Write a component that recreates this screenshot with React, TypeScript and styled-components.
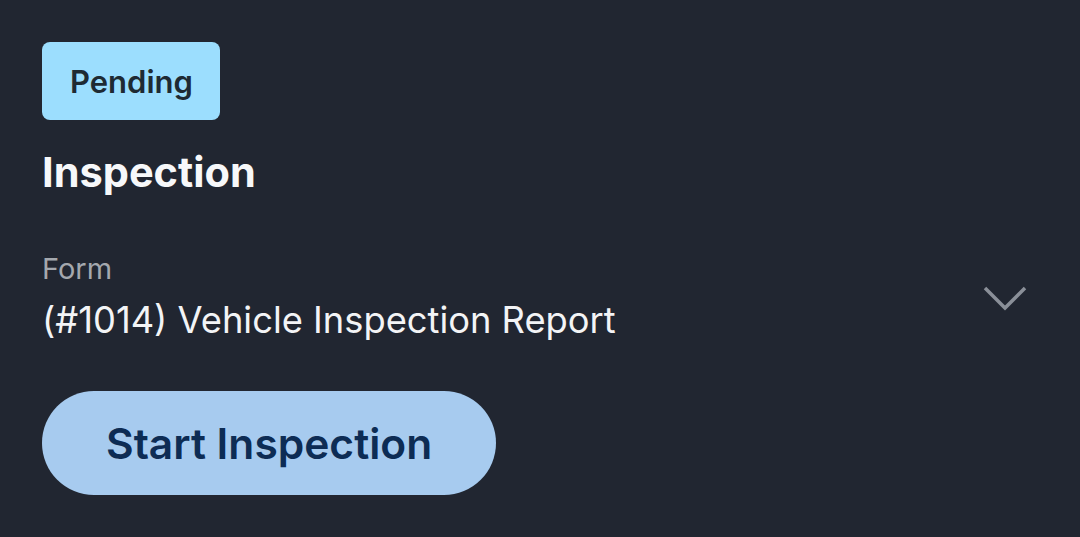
import React from 'react'
import styled, { createGlobalStyle } from 'styled-components'

const GlobalStyle = createGlobalStyle`
  html, body {
    margin: 0;
    padding: 0;
    background: #212631;
  }
  body {
    font-family: Inter, "Noto Sans", sans-serif;
    -webkit-font-smoothing: antialiased;
  }
`

const Card = styled.div`
  width: 1080px;
  height: 537px;
  box-sizing: border-box;
  padding: 42px 42px 0 42px;
  background: #212631;
  display: flex;
  flex-direction: column;
  align-items: flex-start;
`

const Badge = styled.div`
  height: 78px;
  padding: 0 27px 0 28px;
  border-radius: 8px;
  background: #9cdefe;
  color: #1e2a33;
  font-size: 31px;
  font-weight: 600;
  display: flex;
  align-items: center;
`

const Title = styled.h2`
  margin: 28px 0 0 0;
  color: #f7f8fa;
  font-size: 41.5px;
  font-weight: 700;
  line-height: 48px;
`

const FieldRow = styled.div`
  margin-top: 55px;
  width: 100%;
  display: flex;
  align-items: center;
  justify-content: space-between;
`

const Field = styled.div`
  display: flex;
  flex-direction: column;
`

const Label = styled.span`
  color: #a4a8ae;
  font-size: 29px;
  line-height: 36px;
`

const Value = styled.span`
  margin-top: 9px;
  color: #f3f4f6;
  font-size: 36.3px;
  line-height: 48px;
`

const Chevron = styled.svg`
  width: 46px;
  height: 28px;
  margin-right: 10px;
`

const StartButton = styled.button`
  margin-top: 47px;
  height: 104px;
  padding: 0 64px;
  border: none;
  border-radius: 52px;
  background: #a7cbef;
  color: #0d2c54;
  font-family: inherit;
  font-size: 42.5px;
  font-weight: 600;
  cursor: pointer;
`

export default function App() {
  return (
    <>
      <GlobalStyle />
      <Card>
        <Badge>Pending</Badge>
        <Title>Inspection</Title>
        <FieldRow>
          <Field>
            <Label>Form</Label>
            <Value>(#1014) Vehicle Inspection Report</Value>
          </Field>
          <Chevron viewBox="0 0 46 28">
            <path d="M3 4 L23 24 L43 4" fill="none" stroke="#8a8f98" strokeWidth="3.5" />
          </Chevron>
        </FieldRow>
        <StartButton>Start Inspection</StartButton>
      </Card>
    </>
  )
}
